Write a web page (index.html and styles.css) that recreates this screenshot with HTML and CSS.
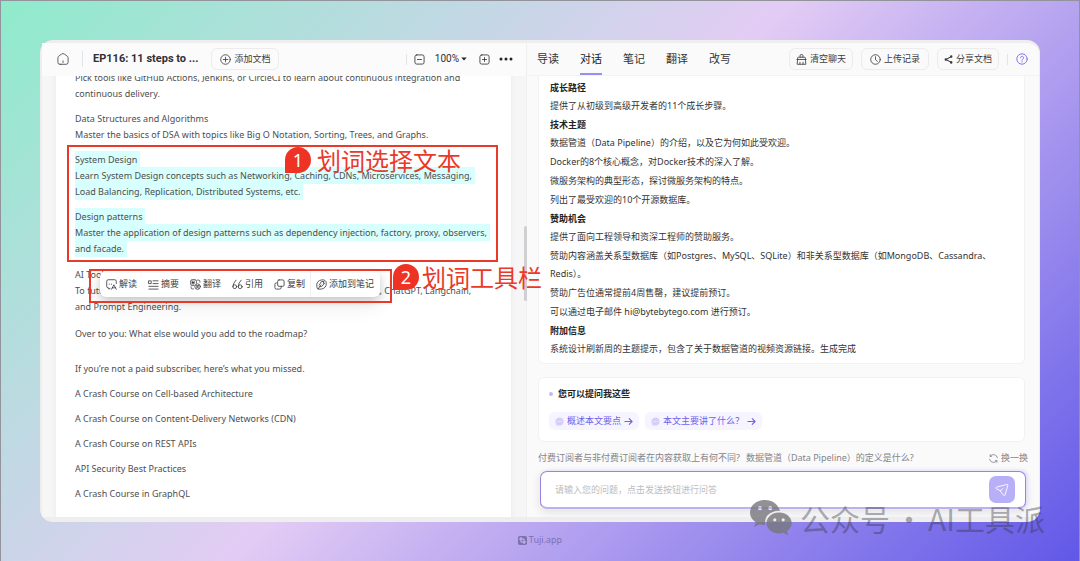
FILE: index.html
```html
<!DOCTYPE html>
<html lang="zh-CN">
<head>
<meta charset="utf-8">
<meta name="viewport" content="width=device-width, initial-scale=1">
<title>EP116: 11 steps to ...</title>
<link rel="stylesheet" href="styles.css">
</head>
<body>
<main class="window">
  <section class="pane reader">
    <header class="bar">
      <button class="icon-btn home" aria-label="主页"><svg class="i12" viewBox="0 0 12 12"><path d="M4.200 11.300H3A2 2 0 0 1 .9 9.300V4.800A2 2 0 0 1 1.700 3.200L4.700 1Q6 .2 7.300 1L10.300 3.200A2 2 0 0 1 11.100 4.800V9.300A2 2 0 0 1 9 11.300H3M6 7.800V9.600"/></svg></button>
      <span class="rule tall"></span>
      <h1 class="title">EP116: 11 steps to ...</h1>
      <button class="btn add"><svg class="i11" viewBox="0 0 12 12"><circle cx="6" cy="6" r="5.200"/><path d="M6 3.500v5M3.500 6h5"/></svg>添加文档</button>
      <div class="zoom">
        <span class="rule"></span>
        <button class="icon-btn" aria-label="缩小"><svg class="i11" viewBox="0 0 12 12"><rect x="1" y="1" width="10" height="10" rx="2"/><path d="M3.800 6h4.400"/></svg></button>
        <button class="icon-btn percent">100%<svg class="caret" viewBox="0 0 6 4"><path d="M.3.5h5.400L3 3.500z"/></svg></button>
        <button class="icon-btn" aria-label="放大"><svg class="i11" viewBox="0 0 12 12"><rect x="1" y="1" width="10" height="10" rx="2"/><path d="M3.800 6h4.400M6 3.800v4.400"/></svg></button>
        <button class="icon-btn" aria-label="更多"><svg class="dots" viewBox="0 0 14 4"><circle cx="2" cy="2" r="1.500"/><circle cx="7" cy="2" r="1.500"/><circle cx="12" cy="2" r="1.500"/></svg></button>
      </div>
    </header>
    <div class="scroll">
      <article class="paper">
        <p>Pick tools like GitHub Actions, Jenkins, or CircleCI to learn about continuous integration and<br>continuous delivery.</p>
        <p>Data Structures and Algorithms<br>Master the basics of DSA with topics like Big O Notation, Sorting, Trees, and Graphs.</p>
        <p><mark>System Design<br>Learn System Design concepts such as Networking, Caching, CDNs, Microservices, Messaging,<br>Load Balancing, Replication, Distributed Systems, etc.</mark></p>
        <p class="selection-end"><mark>Design patterns<br>Master the application of design patterns such as dependency injection, factory, proxy, observers,<br>and facade.</mark></p>
        <p>AI Tools<br>To future proof your career, learn to leverage AI tools like GitHub Copilot, ChatGPT, Langchain,<br>and Prompt Engineering.</p>
        <p class="closing">Over to you: What else would you add to the roadmap?</p>
        <p>If you’re not a paid subscriber, here’s what you missed.</p>
        <p>A Crash Course on Cell-based Architecture</p>
        <p>A Crash Course on Content-Delivery Networks (CDN)</p>
        <p>A Crash Course on REST APIs</p>
        <p>API Security Best Practices</p>
        <p>A Crash Course in GraphQL</p>
      </article>
    </div>
  </section>

  <section class="pane chat">
    <header class="bar">
      <nav class="tabs">
        <button class="tab">导读</button><button class="tab active">对话</button><button class="tab">笔记</button><button class="tab">翻译</button><button class="tab">改写</button>
      </nav>
      <div class="actions">
        <button class="btn"><svg class="i11" viewBox="0 0 12 12"><path d="M4.500 3.500V1.500a.8.8 0 0 1 .8-.8h1.400a.8.8 0 0 1 .8.8v2M1.800 6V4.300a.8.8 0 0 1 .8-.8h6.800a.8.8 0 0 1 .8.8V6M1 6h10M1.800 6L1.200 11.200h9.600L10.200 6M4.300 11V9M7.700 11V9"/></svg>清空聊天</button>
        <button class="btn wide"><svg class="i11" viewBox="0 0 12 12"><circle cx="6" cy="6" r="5.200"/><path d="M6 3v3.200L8 8"/></svg>上传记录</button>
        <button class="btn"><svg class="i9 share" viewBox="0 0 10 10"><path d="M8 1.800L2.200 5L8 8.200"/><circle cx="8" cy="1.800" r=".8"/><circle cx="2" cy="5" r=".8"/><circle cx="8" cy="8.200" r=".8"/></svg>分享文档</button>
        <span class="rule"></span>
        <button class="icon-btn help" aria-label="帮助"><svg class="i12" viewBox="0 0 12 12"><circle cx="6" cy="6" r="5.200"/><path d="M4.400 4.800A1.600 1.500 0 1 1 6.900 6Q6 6.500 6 7.200M6 8.600v.4"/></svg></button>
      </div>
    </header>
    <div class="feed">
      <article class="card answer">
        <h2>成长路径</h2>
        <p>提供了从初级到高级开发者的11个成长步骤。</p>
        <h2>技术主题</h2>
        <p>数据管道（Data Pipeline）的介绍，以及它为何如此受欢迎。</p>
        <p>Docker的8个核心概念，对Docker技术的深入了解。</p>
        <p>微服务架构的典型形态，探讨微服务架构的特点。</p>
        <p>列出了最受欢迎的10个开源数据库。</p>
        <h2>赞助机会</h2>
        <p>提供了面向工程领导和资深工程师的赞助服务。</p>
        <p>赞助内容涵盖关系型数据库（如Postgres、MySQL、SQLite）和非关系型数据库（如MongoDB、Cassandra、<br>Redis）。</p>
        <p>赞助广告位通常提前4周售罄，建议提前预订。</p>
        <p>可以通过电子邮件 hi@bytebytego.com 进行预订。</p>
        <h2>附加信息</h2>
        <p>系统设计刷新周的主题提示，包含了关于数据管道的视频资源链接。生成完成</p>
      </article>
      <section class="card ask">
        <h2>您可以提问我这些</h2>
        <div class="pills">
          <button class="pill"><svg class="i9 bubble" viewBox="0 0 10 10"><path d="M5 .5a4.500 4.500 0 1 1 0 9H.9l.7-1.500A4.500 4.500 0 0 1 5 .5z"/><path class="holes" d="M2.800 5h.4M4.800 5h.4M6.800 5h.4"/></svg>概述本文要点<svg class="i9 arrow" viewBox="0 0 10 10"><path d="M1 5h8M5.800 1.800L9 5L5.800 8.200"/></svg></button>
          <button class="pill"><svg class="i9 bubble" viewBox="0 0 10 10"><path d="M5 .5a4.500 4.500 0 1 1 0 9H.9l.7-1.500A4.500 4.500 0 0 1 5 .5z"/><path class="holes" d="M2.800 5h.4M4.800 5h.4M6.800 5h.4"/></svg>本文主要讲了什么？<svg class="i9 arrow" viewBox="0 0 10 10"><path d="M1 5h8M5.800 1.800L9 5L5.800 8.200"/></svg></button>
        </div>
      </section>
    </div>
    <div class="hints">
      <button class="hint">付费订阅者与非付费订阅者在内容获取上有何不同?</button>
      <button class="hint">数据管道（Data Pipeline）的定义是什么?</button>
      <button class="hint swap"><svg class="i9" viewBox="0 0 10 10"><path d="M9.400 4.200A4.500 4.500 0 0 0 1.300 2.600V.8M.6 5.800A4.500 4.500 0 0 0 8.700 7.400V9.200M1.300 2.600H3M8.700 7.400H7"/></svg>换一换</button>
    </div>
    <form class="composer">
      <input class="question" type="text" aria-label="问题" placeholder="请输入您的问题，点击发送按钮进行问答">
      <button class="send" type="button" aria-label="发送"><svg class="plane" viewBox="0 0 14 14"><path d="M12.300 1.500Q13 1.500 12.900 2.200L10 12Q9.500 13.200 8.600 12.300L6.200 9.200L5.300 7.700L1.200 5.700Q.2 5 1.300 4.300ZM5.300 7.700L8 5.700"/></svg></button>
    </form>
  </section>

  <span class="thumb"></span>

  <div class="frame frame-text"></div>
  <div class="note note-text"><span class="badge">1</span>划词选择文本</div>
  <div class="toolbar" role="toolbar">
    <button class="tool"><svg class="i11" viewBox="0 0 12 12"><path d="M4.500 10.300L3 11V9.700H2.500A1.700 1.700 0 0 1 .8 8V2.500A1.700 1.700 0 0 1 2.500.8h7A1.700 1.700 0 0 1 11.200 2.500V5M3.500 5.500v.3M6 5.500v.3M6 11.200L8.600 6.300L11.200 11.200M7 9.600h3.200"/></svg>解读</button>
    <button class="tool"><svg class="i11" viewBox="0 0 12 12"><path d="M1 2h2.500v3H1zM5.500 2H11M5.500 5H11M1 8h10M1 11h10"/></svg>摘要</button>
    <button class="tool"><svg class="i11" viewBox="0 0 12 12"><path d="M4.500 7H2.300A1.500 1.500 0 0 1 .8 5.500V2.300A1.500 1.500 0 0 1 2.300.8h3.200A1.500 1.500 0 0 1 7 2.300V4.500M2.500 2.300v3h2V3.800h-2M4.500 2.300v1.500h-2M8.300 1.200h1A1.500 1.500 0 0 1 10.800 2.700V3.500M1.200 8.500v.8A1.500 1.500 0 0 0 2.700 10.800h1"/><circle cx="8.300" cy="8.300" r="3"/><path d="M7 7.300h2.600M9.400 7.300L7 10M7.300 8.300L9.600 10"/></svg>翻译</button>
    <button class="tool"><svg class="i11" viewBox="0 0 12 12"><path d="M4.300 1.200Q1 4.500 1 8.300"/><circle cx="3" cy="8.400" r="2.100"/><path d="M10 1.200Q6.800 4.500 6.800 8.300"/><circle cx="8.900" cy="8.400" r="2.100"/></svg>引用</button>
    <button class="tool"><svg class="i11" viewBox="0 0 12 12"><rect x="4" y="1" width="7" height="7" rx="1.500"/><path d="M2.700 4.200A1.600 1.600 0 0 0 1 5.800V9.400A1.600 1.600 0 0 0 2.600 11H6.200A1.600 1.600 0 0 0 7.800 9.600V8"/></svg>复制</button>
    <button class="tool last"><svg class="i11" viewBox="0 0 12 12"><path d="M2 10.800Q.6 9.500.8 6.500Q1 2 6 1Q11 .3 11.200 4.500Q11.300 10 6 11H2L5.500 6.500M3.500 6.800L5.800 2.800H8.800L7.800 4.500H9.300L6.200 8.300H4.200"/></svg>添加到笔记</button>
  </div>
  <div class="frame frame-tool"></div>
  <div class="note note-tool"><span class="badge">2</span>划词工具栏</div>
</main>

<footer class="credit"><svg class="i9" viewBox="0 0 10 10"><rect class="plate" width="10" height="10" rx="2"/><path class="crop" d="M3.300 1.500v5.200h5.200M1.500 3.300h5.200v5.200"/></svg>Tuji.app</footer>

<div class="watermark">
  <svg class="wechat" viewBox="0 0 42 36"><path fill-rule="evenodd" d="M15 0C6.700 0 0 5.400 0 12.500C0 16.500 2.200 20 5.700 22.300L4.300 27L9.700 24.200Q12.300 25 15 25Q14 14.500 24 11.500Q27 10.500 29.900 11C28.500 4.600 22.400 0 15 0ZM10 6.300A2 2 0 1 1 10 10.300A2 2 0 1 1 10 6.300ZM20.200 6.300A2 2 0 1 1 20.200 10.300A2 2 0 1 1 20.200 6.300Z"/><path fill-rule="evenodd" d="M29 12.500C36 12.500 41.700 17.200 41.700 23C41.700 26.300 39.800 29.200 37 31L38 35.500L33.500 32.800Q31.300 33.500 29 33.500C22 33.500 16.500 28.800 16.500 23C16.500 17.200 22 12.500 29 12.500ZM24.800 18.200A1.600 1.600 0 1 0 24.800 21.400A1.600 1.600 0 1 0 24.800 18.200ZM33.200 18.200A1.600 1.600 0 1 0 33.200 21.400A1.600 1.600 0 1 0 33.200 18.200Z"/></svg>
  <span>公众号</span><span>·</span><span>AI工具派</span>
</div>
</body>
</html>
```
FILE: styles.css
```css
* { box-sizing: border-box; }

body {
  margin: 0;
  min-height: 100vh;
  padding: 40px 40px 0;
  display: flex;
  flex-direction: column;
  position: relative;
  overflow: hidden;
  font: 9px/16px "Noto Sans", "Noto Sans CJK SC", sans-serif;
  color: #333;
  background: linear-gradient(135deg, #8eebcb, #e3ccf4 48%, #6057e8);
  box-shadow: inset 0 0 0 1px #93939b;
}

h1, h2, p { margin: 0; }

button {
  margin: 0;
  padding: 0;
  border: 0;
  background: none;
  font: inherit;
  color: inherit;
  display: flex;
  align-items: center;
  white-space: nowrap;
}

svg {
  flex: none;
  fill: none;
  stroke: currentColor;
  stroke-width: 0.9;
  stroke-linecap: round;
  stroke-linejoin: round;
}
.i9 { width: 9px; height: 9px; }
.i11 { width: 11px; height: 11px; }
.i12 { width: 12px; height: 12px; }

.window {
  flex: 1;
  display: grid;
  grid-template-columns: 484fr 513fr;
  position: relative;
  background: #fafafa;
  border: solid #eeeeef;
  border-width: 3px 1px 5px 2px;
  border-radius: 13px;
}
.pane { display: flex; flex-direction: column; min-width: 0; }
.bar {
  height: 33px;
  flex: none;
  display: flex;
  align-items: center;
  border-bottom: 1px solid #f3f3f4;
}
.rule { width: 1px; height: 11px; background: #e4e4e8; }
.rule.tall { height: 16px; }
.btn {
  height: 22px;
  padding: 0 6px;
  gap: 3px;
  border: 1px solid #ececef;
  border-radius: 6px;
  color: #3c3c42;
}
.btn.wide { padding: 0 8px; }
.share { stroke-width: 1.2; }

/* Document reader */
.reader { background: #f6f6f7; }
.reader .bar { background: #fbfbfb; padding: 0 13px 0 15px; border-color: #fbfbfb; }
.home { margin-right: 13px; color: #55555a; }
.title {
  margin: 0 13px 0 10px;
  font: 700 11px/16px Roboto, sans-serif;
  color: #303036;
  white-space: nowrap;
}
.btn.add { padding: 0 8px; }
.zoom { margin-left: auto; display: flex; align-items: center; color: #303036; }
.zoom .rule { margin-right: 7px; }
.percent { margin: 0 12px 0 10px; font: 10px/16px Roboto, sans-serif; }
.caret { width: 6px; height: 4px; margin-left: 2px; fill: #222; stroke: none; }
.dots { width: 14px; height: 4px; margin-left: 9px; fill: #222; stroke: none; }
.scroll { flex: 1 1 0; overflow: hidden; padding: 0 15px 0 14px; }
.paper {
  min-height: 120%;
  margin-top: -6px;
  padding: 0 19px;
  background: #fff;
  color: #4e4e50;
  box-shadow: 0 0 6px #e9e9ec;
  white-space: nowrap;
}
.paper p { margin-bottom: 9px; }
.paper .selection-end { margin-bottom: 10px; }
.paper .closing { padding-top: 2px; margin-bottom: 19px; }
mark {
  color: inherit;
  background: #d7fffd;
  padding: 2px 3px 2px 0;
  -webkit-box-decoration-break: clone;
  box-decoration-break: clone;
}
.thumb {
  position: absolute;
  left: 482px;
  top: 183px;
  width: 3px;
  height: 75px;
  border-radius: 2px;
  background: #d0d0d2;
}

/* Chat */
.chat { border-left: 1px solid #f0f0f2; padding: 0 11px 8px; }
.chat .bar { margin: 0 -11px; padding: 0 11px 0 10px; }
.tabs { display: flex; gap: 21px; align-self: stretch; }
.tab { font-size: 11px; padding-top: 2px; border-bottom: 2px solid transparent; }
.tab.active { border-color: #968ff4; color: #222; }
.actions { margin-left: auto; display: flex; align-items: center; gap: 8px; }
.help { color: #7668ee; }
.card { background: #fff; border: 1px solid #f2f2f4; border-radius: 6px; }
.feed { margin-right: 3px; display: flex; flex-direction: column; gap: 13px; color: #333; }
.feed h2 { font-size: 9px; line-height: 18px; font-weight: 700; color: #222; }
.answer { padding: 3px 11px 4px; line-height: 18px; border-top: 0; border-radius: 0 0 6px 6px; }
.answer p { margin-bottom: 1px; }
.ask { padding: 7px 10px 11px; }
.ask h2 { display: flex; align-items: center; gap: 5px; }
.ask h2::before { content: ""; width: 4px; height: 4px; border-radius: 50%; background: #c0bbf8; }
.pills { display: flex; gap: 6px; margin-top: 9px; }
.pill {
  height: 18px;
  padding: 0 6px;
  gap: 3px;
  border-radius: 6px;
  background: #f6f5ff;
  color: #6f61ea;
}
.bubble { fill: #d5cff7; stroke: none; }
.bubble .holes { stroke: #f6f5ff; }
.arrow { stroke-width: 1.2; }

.hints { display: flex; gap: 6px; margin: 8px 0 5px; color: #84848c; }
.swap { margin-left: auto; gap: 3px; }
.composer {
  margin: 0 2px;
  height: 38px;
  display: flex;
  align-items: center;
  padding: 0 10px 0 14px;
  background: #fff;
  border: 1px solid #9286ec;
  border-bottom-color: #b9b2f2;
  border-bottom-width: 2px;
  border-radius: 7px;
  box-shadow: -2px 1px 2px #fbeede, 2px -1px 3px #e4dffa, 0 3px 8px #dedde8;
}
.question {
  flex: 1;
  min-width: 0;
  border: 0;
  padding: 0;
  outline: 0;
  background: none;
  font: inherit;
  color: #333;
}
.question::placeholder { color: #bcbcc0; opacity: 1; }
.send {
  width: 26px;
  height: 27px;
  justify-content: center;
  border-radius: 7px;
  background: #b7b0f8;
  color: #fff;
}
.plane { width: 14px; height: 14px; }

/* Selection toolbar and callouts lie over the document */
.toolbar {
  position: absolute;
  left: 58px;
  top: 228px;
  height: 26px;
  display: flex;
  align-items: center;
  gap: 11px;
  padding: 0 6px;
  border-radius: 6px;
  background: #fff;
  box-shadow: 0 3px 10px #00000030, 0 10px 20px #00000012;
  color: #3c3c42;
}
.tool { gap: 2px; }
.tool.last { height: 26px; padding-left: 5px; margin-left: -6px; border-left: 1px solid #f0f0f2; }
.frame { position: absolute; border: 2px solid #ea3829; }
.frame-text { left: 25px; top: 102px; width: 431px; height: 117px; }
.frame-tool { left: 47px; top: 226px; width: 303px; height: 34px; }
.note {
  position: absolute;
  display: flex;
  align-items: center;
  gap: 6px;
  font: 24px/26px "Noto Sans CJK SC", sans-serif;
  color: #ea3829;
  white-space: nowrap;
}
.note-text { left: 243px; top: 104px; }
.note-tool { left: 351px; top: 221px; gap: 3px; }
.badge {
  width: 26px;
  height: 26px;
  flex: none;
  border-radius: 50% 50% 50% 0;
  background: #ee3324;
  color: #fff;
  font: 18px/26px "Noto Sans", sans-serif;
  text-align: center;
}

.credit {
  height: 41px;
  flex: none;
  display: flex;
  align-items: center;
  justify-content: center;
  gap: 2px;
  padding-bottom: 5px;
  color: #7f70b4;
}
.plate { fill: #7f70b4; stroke: none; }
.crop { stroke: #ddd0f4; }

.watermark {
  position: absolute;
  right: 35px;
  bottom: 27px;
  display: flex;
  align-items: center;
  gap: 4px;
  font: 30px/36px "Noto Sans CJK SC", sans-serif;
  white-space: nowrap;
  color: #33333a66;
}
.wechat { width: 42px; height: 36px; margin-right: 4px; fill: #77777c; stroke: none; opacity: 0.8; }
```
